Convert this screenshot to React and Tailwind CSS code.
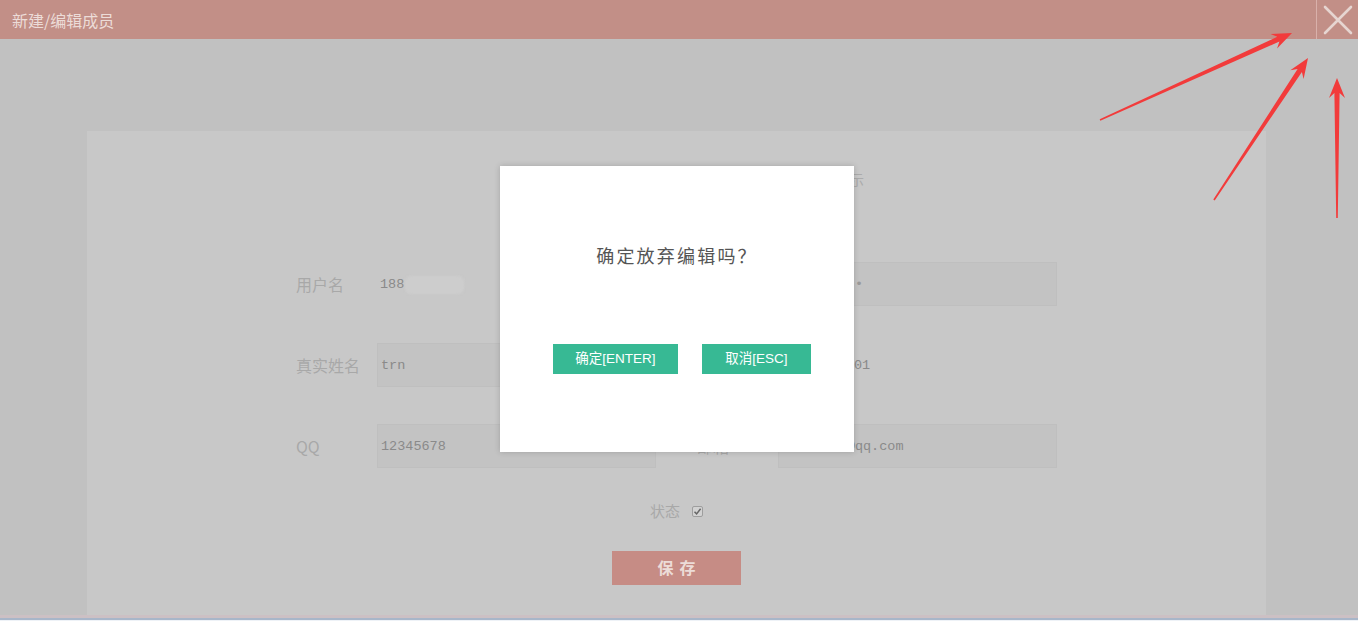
import React from "react";

const cjk = { fontFamily: '"Noto Sans CJK SC", "Noto Sans", sans-serif' };
const mono = { fontFamily: '"Liberation Mono", "Noto Sans CJK SC", monospace' };
const btnFont = { fontFamily: '"Liberation Sans", "Noto Sans CJK SC", sans-serif' };

function arrowPoints(tx, ty, hx, hy) {
  const dx = hx - tx;
  const dy = hy - ty;
  const len = Math.hypot(dx, dy);
  const ux = dx / len;
  const uy = dy / len;
  const nx = -uy;
  const ny = ux;
  const headLen = 20;
  const headW = 8;
  const tailW = 0.8;
  const neckW = 2.6;
  const bx = hx - ux * headLen;
  const by = hy - uy * headLen;
  const cx = hx - ux * (headLen - 5);
  const cy = hy - uy * (headLen - 5);
  const pts = [
    [tx + nx * tailW, ty + ny * tailW],
    [cx + nx * neckW, cy + ny * neckW],
    [bx + nx * headW, by + ny * headW],
    [hx, hy],
    [bx - nx * headW, by - ny * headW],
    [cx - nx * neckW, cy - ny * neckW],
    [tx - nx * tailW, ty - ny * tailW],
  ];
  return pts.map((p) => p.map((v) => v.toFixed(1)).join(",")).join(" ");
}

function Field({ label, value, boxed, valueClass = "", extra }) {
  return (
    <div className="flex items-center h-[44px]">
      <div className="w-[81px] text-[16px] text-[#a8a8a8]" style={cjk}>
        {label}
      </div>
      <div
        className={`w-[279px] h-[44px] flex items-center pl-[3px] ${
          boxed ? "bg-[#c3c3c3] border border-[#bfbfbf]" : ""
        }`}
      >
        <span className={`mt-[3px] text-[13.5px] text-[#8a8a8a] ${valueClass}`} style={mono}>
          {value}
        </span>
        {extra}
      </div>
    </div>
  );
}

export default function App() {
  return (
    <div className="relative w-[1358px] h-[621px] overflow-hidden bg-[#c1c1c1] flex flex-col">
      {/* Header */}
      <div className="h-[39px] bg-[#c28f87] flex items-center justify-between shrink-0">
        <div className="pl-[12px] text-[16px] text-[#ecdcd8]" style={cjk}>
          新建/编辑成员
        </div>
        <div className="h-full w-[42px] border-l border-[#d9b1ab] flex items-center justify-center">
          <svg width="30" height="30" viewBox="0 0 30 30">
            <path d="M2 2 L28 28 M28 2 L2 28" stroke="#e6d5d1" strokeWidth="2.6" strokeLinecap="round" />
          </svg>
        </div>
      </div>

      {/* Body */}
      <div className="flex-1 pt-[92px] pl-[87px] pr-[92px]">
        <div className="h-[484px] bg-[#c8c8c8] flex flex-col">
          <div className="h-[60px] pt-[38px] pl-[749px] text-[14px] text-[#ababab] leading-[20px]" style={cjk}>
            提示
          </div>
          <div className="pt-[71px] pl-[209px] flex flex-col gap-[37px]">
            <div className="flex gap-[41px]">
              <Field
                label="用户名"
                value="188"
                extra={<span className="mt-[2px] ml-[1px] w-[59px] h-[18px] rounded-[6px] bg-[#cdcdcd] blur-[1px]" />}
              />
              <Field label="" value="••••••••••" boxed valueClass="text-[#9a9a9a]" />
            </div>
            <div className="flex gap-[41px]">
              <Field label="真实姓名" value="trn" boxed />
              <Field label="" value="18800000001" />
            </div>
            <div className="flex gap-[41px]">
              <Field label="QQ" value="12345678" boxed />
              <Field label="邮箱" value="12345678@qq.com" boxed />
            </div>
          </div>
          <div className="mt-[33px] flex items-center justify-center gap-[12px] h-[20px]">
            <span className="text-[15px] text-[#a8a8a8]" style={cjk}>
              状态
            </span>
            <span className="w-[11px] h-[11px] border border-[#9e9e9e] bg-[#d2d2d2] rounded-[2px] flex items-center justify-center">
              <svg width="9" height="9" viewBox="0 0 9 9">
                <path d="M1.5 4.8 L3.6 6.9 L7.6 1.8" stroke="#666" strokeWidth="1.5" fill="none" />
              </svg>
            </span>
          </div>
          <div className="mt-[30px] flex justify-center">
            <div
              className="w-[129px] h-[34px] bg-[#c68c85] flex items-center justify-center text-[16px] font-bold tracking-[6px] pl-[6px] pb-[3px] text-[#ecdcd8]"
              style={cjk}
            >
              保存
            </div>
          </div>
        </div>
      </div>

      {/* Bottom edge */}
      <div className="h-[3px] bg-[#ccc0c4] shrink-0" />
      <div className="h-[2px] bg-[#a8b6c9] shrink-0" />
      <div className="h-[1px] bg-[#eef2f7] shrink-0" />

      {/* Confirm modal */}
      <div className="absolute left-[500px] top-[166px] w-[354px] h-[286px] bg-white shadow-[0_0_6px_rgba(0,0,0,0.18)] flex flex-col">
        <div className="pt-[77px] text-center text-[18px] tracking-[2.2px] text-[#555555] leading-[24px]" style={cjk}>
          确定放弃编辑吗？
        </div>
        <div className="mt-[77px] pl-[53px] flex gap-[24px]">
          <div
            className="w-[125px] h-[30px] bg-[#37b994] text-white text-[13.5px] flex items-center justify-center"
            style={btnFont}
          >
            确定[ENTER]
          </div>
          <div
            className="w-[109px] h-[30px] bg-[#37b994] text-white text-[13.5px] flex items-center justify-center"
            style={btnFont}
          >
            取消[ESC]
          </div>
        </div>
      </div>

      {/* Annotation arrows */}
      <svg className="absolute inset-0 pointer-events-none" width="1358" height="621" viewBox="0 0 1358 621">
        <polygon points={arrowPoints(1100, 120, 1292, 33)} fill="#f23b3b" />
        <polygon points={arrowPoints(1214, 200, 1308, 58)} fill="#f23b3b" />
        <polygon points={arrowPoints(1337, 218, 1337, 78)} fill="#f23b3b" />
      </svg>
    </div>
  );
}
